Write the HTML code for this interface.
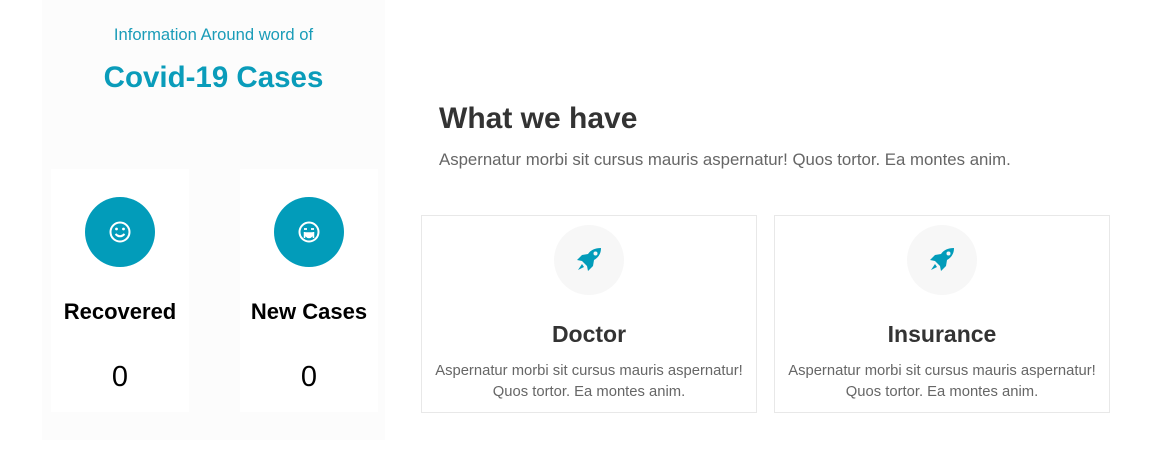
<!DOCTYPE html>
<html><head><style>
body{margin:0;width:1150px;height:455px;background:#fff;font-family:"Liberation Sans",sans-serif;position:relative;overflow:hidden}
.left{position:absolute;left:42px;top:0;width:343px;height:440px;background:#fcfcfc}
.abs{position:absolute}
.c{text-align:center}
.card{position:absolute;top:169px;width:138px;height:243px;background:#fff}
.circ{position:absolute;left:34px;top:28px;width:70px;height:70px;border-radius:50%;background:#029cba}
.card h3{position:absolute;top:130px;left:-20px;right:-20px;margin:0;text-align:center;font-size:22px;color:#000}
.card .n{position:absolute;top:192px;left:0;right:0;text-align:center;font-size:29px;color:#000}
.box{position:absolute;top:215px;width:334px;height:196px;border:1px solid #e8e8e8;background:#fff}
.ic{position:absolute;left:132px;top:9px;width:70px;height:70px;border-radius:50%;background:#f7f7f7}
.box h4{position:absolute;top:105px;left:0;right:0;margin:0;text-align:center;font-size:23px;color:#333}
.box p{position:absolute;top:145px;left:-10px;right:-10px;margin:0;text-align:center;font-size:14.8px;line-height:21px;color:#666}
</style></head><body>
<div class="left">
<div class="abs c" style="left:0;right:0;top:25px;font-size:16.6px;color:#1a9cb8">Information Around word of</div>
<div class="abs c" style="left:0;right:0;top:61px;font-size:29.5px;font-weight:bold;color:#0a9cba">Covid-19 Cases</div>
</div>
<div class="card" style="left:51px"><div class="circ"><svg width="70" height="70" viewBox="0 0 70 70"><circle cx="35" cy="35" r="9.5" fill="none" stroke="#fff" stroke-width="2"/><circle cx="31.5" cy="32" r="1.4" fill="#fff"/><circle cx="38.5" cy="32" r="1.4" fill="#fff"/><path d="M30.5 37q4.5 4.5 9 0" fill="none" stroke="#fff" stroke-width="2"/></svg></div><h3>Recovered</h3><div class="n">0</div></div>
<div class="card" style="left:240px"><div class="circ"><svg width="70" height="70" viewBox="0 0 70 70"><circle cx="35" cy="35" r="9.5" fill="none" stroke="#fff" stroke-width="2"/><path d="M30 32h3M37 32h3" stroke="#fff" stroke-width="1.8"/><path d="M30.5 35v6M39.5 35v6M32 36h6v3q-3 3-6 0z" fill="#fff" stroke="#fff" stroke-width="1.5"/></svg></div><h3>New Cases</h3><div class="n">0</div></div>
<div class="abs" style="left:439px;top:102px;font-size:30px;font-weight:bold;color:#333">What we have</div>
<div class="abs" style="left:439px;top:150px;font-size:16.8px;color:#666">Aspernatur morbi sit cursus mauris aspernatur! Quos tortor. Ea montes anim.</div>
<div class="box" style="left:421px"><div class="ic"><svg width="70" height="70" viewBox="0 0 70 70"><path d="M47 23q-9 0-13 6l-6 1-5 5 5 1 5 5 1 5 5-5 1-6q7-4 7-12z" fill="#029cba"/><circle cx="41.5" cy="28.5" r="2" fill="#f7f7f7"/><path d="M28 39l-4 6 6-3z" fill="#029cba"/></svg></div><h4>Doctor</h4><p>Aspernatur morbi sit cursus mauris aspernatur!<br>Quos tortor. Ea montes anim.</p></div>
<div class="box" style="left:774px"><div class="ic"><svg width="70" height="70" viewBox="0 0 70 70"><path d="M47 23q-9 0-13 6l-6 1-5 5 5 1 5 5 1 5 5-5 1-6q7-4 7-12z" fill="#029cba"/><circle cx="41.5" cy="28.5" r="2" fill="#f7f7f7"/><path d="M28 39l-4 6 6-3z" fill="#029cba"/></svg></div><h4>Insurance</h4><p>Aspernatur morbi sit cursus mauris aspernatur!<br>Quos tortor. Ea montes anim.</p></div>
</body></html>
